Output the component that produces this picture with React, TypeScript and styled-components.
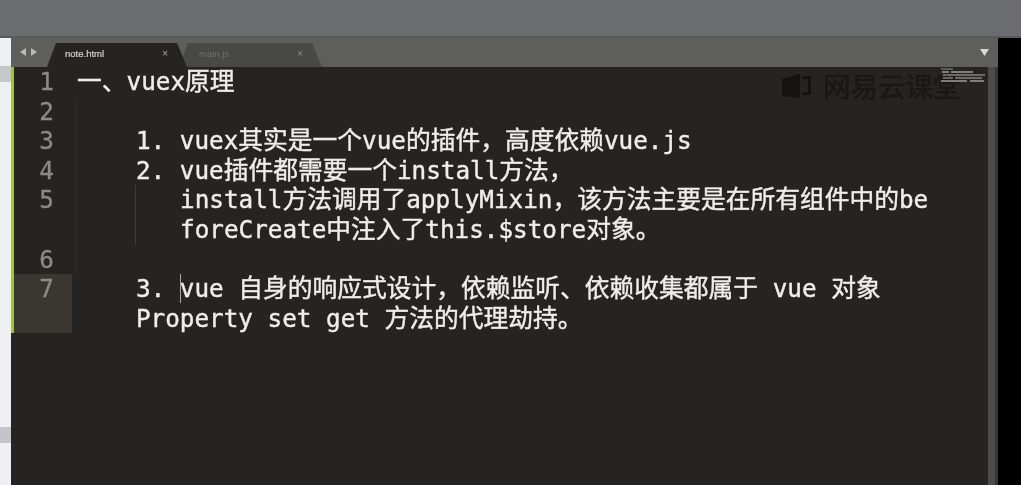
import styled, { createGlobalStyle } from 'styled-components';

const GlobalStyle = createGlobalStyle`
  html, body {
    margin: 0;
    padding: 0;
    background: #000;
    overflow: hidden;
  }
`;

const lines = [
  { num: '1', text: '一、vuex原理', indent: 0 },
  { num: '2', text: '', indent: 0, root: true },
  { num: '3', text: '1. vuex其实是一个vue的插件，高度依赖vue.js', indent: 4, root: true },
  { num: '4', text: '2. vue插件都需要一个install方法，', indent: 4, root: true },
  { num: '5', text: 'install方法调用了applyMixin，该方法主要是在所有组件中的be', indent: 7, root: true, guide: true },
  { num: '', text: 'foreCreate中注入了this.$store对象。', indent: 7, root: true, guide: true },
  { num: '6', text: '', indent: 0, root: true },
];

// latin runs sit a bit smaller than the CJK around them
function Mixed({ text }: { text: string }) {
  const parts = text.split(/([^\u3000-\u303f\u4e00-\u9fff\uff00-\uffef]+)/);
  return (
    <>
      {parts.map((part, i) => (i % 2 === 1 ? <Latin key={i}>{part}</Latin> : part))}
    </>
  );
}

function App() {
  return (
    <Page>
      <GlobalStyle />
      <TopBar />
      <Body>
        <SideStrip>
          <TopPatch />
          <BottomPatch />
        </SideStrip>
        <Editor>
          <TabBar>
            <Arrows>
              <svg width='17' height='10' viewBox='0 0 17 10' fill='#b9b9b9'>
                <polygon points='6,1 6,9 0,5' />
                <polygon points='11,1 11,9 17,5' />
              </svg>
            </Arrows>
            <Tab $active>
              <TabName $active>note.html</TabName>
              <TabClose $active>×</TabClose>
            </Tab>
            <Tab>
              <TabName>main.js</TabName>
              <TabClose>×</TabClose>
            </Tab>
            <DropArrow>
              <svg width='9' height='7' viewBox='0 0 9 7' fill='#d8d8d8'>
                <polygon points='0,0 9,0 4.5,7' />
              </svg>
            </DropArrow>
          </TabBar>
          <Content>
            <Lines>
              <GreenEdge />
              <div>
                {lines.map((line, i) => (
                  <Row key={i}>
                    <Gutter>{line.num}</Gutter>
                    <Code $indent={line.indent}>
                      {line.root && <Guide $left={4} $faint />}
                      {line.guide && <Guide $left={63} />}
                      <Mixed text={line.text} />
                    </Code>
                  </Row>
                ))}
                <Row>
                  <Gutter $current>7</Gutter>
                  <Code $indent={4}>
                    <Latin>3. </Latin>
                    <Caret />
                    <Mixed text='vue 自身的响应式设计，依赖监听、依赖收集都属于 vue 对象' />
                  </Code>
                </Row>
                <Row>
                  <Gutter $current />
                  <Code $indent={4}>
                    <Mixed text='Property set get 方法的代理劫持。' />
                  </Code>
                </Row>
              </div>
            </Lines>
            <Watermark>
              <svg width='32' height='28' viewBox='0 0 32 28' fill='#141311'>
                <polygon points='1,8 19,3 19,27 1,25' />
                <polygon points='21,5 30,5 30,24 21,24 21,21 27,21 27,8 21,8' />
              </svg>
              <WatermarkText>网易云课堂</WatermarkText>
            </Watermark>
            <Minimap>
              <svg width='46' height='16' viewBox='0 0 46 16' stroke='#d8d8d8' strokeWidth='1'>
                <path d='M1 1h12' opacity='.6' />
                <path d='M2 4h7M11 4h22' />
                <path d='M3 7h30M33 7h12' opacity='.8' />
                <path d='M3 10h10M15 10h27' opacity='.8' />
                <path d='M1 13h26M30 13h14' />
              </svg>
            </Minimap>
            <ScrollTrack>
              <ScrollThumb />
            </ScrollTrack>
          </Content>
        </Editor>
      </Body>
    </Page>
  );
}

export default App;

const Page = styled.div`
  width: 1021px;
  height: 485px;
  display: flex;
  flex-direction: column;
  background: #000;
  filter: blur(0.6px);
`;

const TopBar = styled.div`
  height: 38px;
  flex-shrink: 0;
  box-sizing: border-box;
  background: #6b6c70;
  border-bottom: 2px solid #58595b;
`;

const Body = styled.div`
  flex: 1;
  display: flex;
  min-height: 0;
`;

const SideStrip = styled.div`
  width: 11px;
  flex-shrink: 0;
  background: #eef0f3;
  padding-top: 28px;
`;

const TopPatch = styled.div`
  height: 16px;
  background: #c6c7ca;
`;

const BottomPatch = styled.div`
  height: 16px;
  margin-top: 345px;
  background: #c4c5ca;
`;

const Editor = styled.div`
  width: 987px;
  flex-shrink: 0;
  display: flex;
  flex-direction: column;
  background: #252422;
`;

const TabBar = styled.div`
  height: 29px;
  flex-shrink: 0;
  display: flex;
  align-items: flex-end;
  background: #5e5e5c;
`;

const Arrows = styled.div`
  width: 36px;
  flex-shrink: 0;
  box-sizing: border-box;
  align-self: center;
  display: flex;
  padding: 0 0 1px 9px;
`;

const Tab = styled.div<{ $active?: boolean }>`
  width: ${(p) => (p.$active ? 140 : 143)}px;
  height: 24px;
  margin-left: ${(p) => (p.$active ? 0 : -8)}px;
  position: relative;
  z-index: ${(p) => (p.$active ? 1 : 0)};
  box-sizing: border-box;
  display: flex;
  align-items: center;
  justify-content: space-between;
  padding: 0 19px 4px ${(p) => (p.$active ? 18 : 20)}px;
  background: ${(p) => (p.$active ? '#252422' : '#484846')};
  clip-path: polygon(0 100%, 9px 0, calc(100% - 10px) 0, 100% 100%);
`;

const TabName = styled.span<{ $active?: boolean }>`
  font-family: 'Liberation Sans', Arial, sans-serif;
  font-size: 9.5px;
  color: ${(p) => (p.$active ? '#d2d2d0' : '#6f6f6d')};
  -webkit-text-stroke: ${(p) => (p.$active ? '0.2px' : '0')};
`;

const TabClose = styled.span<{ $active?: boolean }>`
  font-family: 'Liberation Sans', Arial, sans-serif;
  font-size: 10px;
  color: ${(p) => (p.$active ? '#a8a8a6' : '#8a8a88')};
`;

const DropArrow = styled.div`
  margin-left: auto;
  margin-right: 9px;
  align-self: center;
  display: flex;
  padding-bottom: 1px;
`;

const Content = styled.div`
  flex: 1;
  position: relative;
  min-height: 0;
`;

const Lines = styled.div`
  display: flex;
  align-items: flex-start;
`;

const GreenEdge = styled.div`
  width: 3px;
  height: 266px;
  flex-shrink: 0;
  background: #a6bd4c;
`;

const Row = styled.div`
  display: flex;
  height: 29.6px;
`;

const Gutter = styled.div<{ $current?: boolean }>`
  width: 58px;
  flex-shrink: 0;
  box-sizing: border-box;
  padding-right: 18px;
  text-align: right;
  font-family: 'DejaVu Sans Mono', monospace;
  font-size: 24.3px;
  line-height: 29.6px;
  color: #8b8b89;
  -webkit-text-stroke: 0.3px #8b8b89;
  background: ${(p) => (p.$current ? '#3a3730' : 'transparent')};
`;

const Code = styled.div<{ $indent: number }>`
  position: relative;
  padding-left: ${(p) => 5 + p.$indent * 14.72}px;
  font-family: 'DejaVu Sans Mono', 'Noto Sans CJK SC', monospace;
  font-size: 24.75px;
  line-height: 29.6px;
  color: #eeeeea;
  -webkit-text-stroke: 0.4px #eeeeea;
  white-space: pre;
`;

const Latin = styled.span`
  font-size: 24.3px;
`;

const Guide = styled.span<{ $left: number; $faint?: boolean }>`
  position: absolute;
  left: ${(p) => p.$left}px;
  top: 0;
  bottom: 0;
  width: 1px;
  background: ${(p) => (p.$faint ? '#302f2c' : '#3f3e3b')};
`;

const Caret = styled.span`
  display: inline-block;
  width: 1px;
  height: 29px;
  margin-right: -1px;
  vertical-align: top;
  background: #a8a8a6;
`;

const Watermark = styled.div`
  position: absolute;
  left: 770px;
  top: 3px;
  display: flex;
  align-items: center;
  gap: 10px;
`;

const WatermarkText = styled.span`
  font-family: 'Noto Sans CJK SC', sans-serif;
  font-size: 27.5px;
  line-height: 30px;
  color: #191816;
  -webkit-text-stroke: 0.5px #191816;
`;

const Minimap = styled.div`
  position: absolute;
  left: 929px;
  top: 1px;
  display: flex;
`;

const ScrollTrack = styled.div`
  position: absolute;
  right: 0;
  top: 0;
  bottom: 0;
  width: 10px;
  background: #383836;
`;

const ScrollThumb = styled.div`
  width: 7px;
  height: 100%;
  background: #4c4c4a;
`;
